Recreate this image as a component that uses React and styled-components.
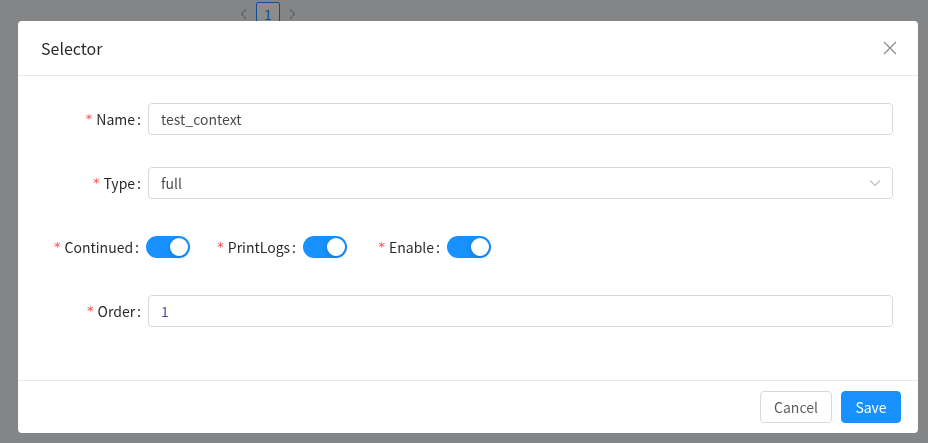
import React from "react";
import styled, { createGlobalStyle } from "styled-components";

const GlobalStyle = createGlobalStyle`
  html, body { margin: 0; padding: 0; }
  body {
    background: #f0f2f5;
    font-family: "Segoe UI", "Noto Sans CJK SC", "Open Sans", sans-serif;
    font-size: 14px;
    line-height: 1.5715;
    color: rgba(0, 0, 0, 0.85);
  }
`;

const Page = styled.div`
  min-height: 100vh;
`;

const Pagination = styled.ul`
  list-style: none;
  margin: 0;
  padding: 2px 0 0 232px;
  display: flex;
  align-items: center;
`;

const PageArrow = styled.li`
  width: 24px;
  height: 24px;
  display: flex;
  align-items: center;
  justify-content: center;
  color: rgba(0, 0, 0, 0.25);
`;

const PageItem = styled.li`
  width: 22px;
  height: 22px;
  border: 1px solid #1890ff;
  border-radius: 2px;
  display: flex;
  align-items: center;
  justify-content: center;
  color: #1890ff;
  font-size: 14px;
  background: #fff;
`;

const Overlay = styled.div`
  position: fixed;
  inset: 0;
  background: rgba(0, 0, 0, 0.45);
`;

const ModalWrap = styled.div`
  position: fixed;
  top: 21px;
  left: 18px;
  width: 900px;
`;

const Modal = styled.div`
  background: #fff;
  border-radius: 4px;
  display: flex;
  flex-direction: column;
  overflow: hidden;
`;

const Header = styled.div`
  position: relative;
  padding: 16px 24px 16px 23px;
  border-bottom: 1px solid #e8e8e8;
`;

const Title = styled.div`
  font-size: 16px;
  line-height: 22px;
  height: 22px;
  color: rgba(0, 0, 0, 0.85);
`;

const Close = styled.button`
  position: absolute;
  top: 0;
  right: 0;
  width: 56px;
  height: 54px;
  border: 0;
  background: transparent;
  padding: 0;
  display: flex;
  align-items: center;
  justify-content: center;
  color: rgba(0, 0, 0, 0.45);
`;

const Body = styled.div`
  padding: 27px 25px 53px 24px;
  display: flex;
  flex-direction: column;
  gap: 32px;
`;

const Row = styled.div`
  display: flex;
  align-items: center;
  height: 32px;
`;

const Label = styled.label`
  width: ${(p) => p.$w}px;
  flex: none;
  display: flex;
  justify-content: flex-end;
  align-items: center;
  padding-right: ${(p) => p.$pr ?? 7}px;
  box-sizing: border-box;
  white-space: nowrap;
  color: rgba(0, 0, 0, 0.85);
`;

const Req = styled.span`
  color: #ff4d4f;
  font-family: SimSun, "DejaVu Sans", sans-serif;
  font-size: 13px;
  margin-right: 4px;
`;

const Colon = styled.span`
  margin-left: 2px;
`;

const Input = styled.div`
  flex: 1;
  height: 32px;
  box-sizing: border-box;
  border: 1px solid #d9d9d9;
  border-radius: 4px;
  padding: 0 11px 0 12px;
  display: flex;
  align-items: center;
  justify-content: space-between;
  color: ${(p) => p.$color || "rgba(0, 0, 0, 0.72)"};
`;

const Arrow = styled.span`
  display: flex;
  color: #bfbfbf;
`;

const SwitchGroup = styled.div`
  display: flex;
  align-items: center;
  margin-right: ${(p) => p.$mr || 0}px;
`;

const Switch = styled.span`
  width: 44px;
  height: 22px;
  border-radius: 11px;
  background: #1890ff;
  position: relative;
  flex: none;
  &::after {
    content: "";
    position: absolute;
    top: 2px;
    right: 2px;
    width: 18px;
    height: 18px;
    border-radius: 50%;
    background: #fff;
    box-shadow: 0 2px 4px rgba(0, 35, 11, 0.2);
  }
`;

const Footer = styled.div`
  border-top: 1px solid #e8e8e8;
  padding: 10px 17px 10px 16px;
  display: flex;
  justify-content: flex-end;
  gap: 9px;
`;

const Button = styled.button`
  height: 32px;
  width: ${(p) => p.$w}px;
  box-sizing: border-box;
  border-radius: 4px;
  font-family: inherit;
  font-size: 14px;
  padding: 0;
  border: 1px solid ${(p) => (p.$primary ? "#1890ff" : "#d9d9d9")};
  background: ${(p) => (p.$primary ? "#1890ff" : "#fff")};
  color: ${(p) => (p.$primary ? "#fff" : "rgba(0, 0, 0, 0.65)")};
`;

const FieldLabel = ({ w, pr, children }) => (
  <Label $w={w} $pr={pr}>
    <Req>*</Req>
    {children}
    <Colon>:</Colon>
  </Label>
);

export default function App() {
  return (
    <Page>
      <GlobalStyle />
      <Pagination>
        <PageArrow>
          <svg width="8" height="12" viewBox="0 0 8 12" fill="none" stroke="currentColor" strokeWidth="1.2">
            <path d="M6 1 L1.5 6 L6 11" />
          </svg>
        </PageArrow>
        <PageItem>1</PageItem>
        <PageArrow>
          <svg width="8" height="12" viewBox="0 0 8 12" fill="none" stroke="currentColor" strokeWidth="1.2">
            <path d="M2 1 L6.5 6 L2 11" />
          </svg>
        </PageArrow>
      </Pagination>
      <Overlay />
      <ModalWrap>
        <Modal>
          <Header>
            <Title>Selector</Title>
            <Close aria-label="close">
              <svg width="14" height="14" viewBox="0 0 14 14" stroke="currentColor" strokeWidth="1.3" fill="none">
                <path d="M1 1 L13 13 M13 1 L1 13" />
              </svg>
            </Close>
          </Header>
          <Body>
            <Row>
              <FieldLabel w={106}>Name</FieldLabel>
              <Input>test_context</Input>
            </Row>
            <Row>
              <FieldLabel w={106}>Type</FieldLabel>
              <Input>
                full
                <Arrow>
                  <svg width="12" height="8" viewBox="0 0 12 8" fill="none" stroke="currentColor" strokeWidth="1.2">
                    <path d="M1 1.5 L6 6.5 L11 1.5" />
                  </svg>
                </Arrow>
              </Input>
            </Row>
            <Row>
              <SwitchGroup $mr={32}>
                <FieldLabel w={104}>Continued</FieldLabel>
                <Switch />
              </SwitchGroup>
              <SwitchGroup $mr={36}>
                <FieldLabel w={81}>PrintLogs</FieldLabel>
                <Switch />
              </SwitchGroup>
              <SwitchGroup>
                <FieldLabel w={64}>Enable</FieldLabel>
                <Switch />
              </SwitchGroup>
            </Row>
            <Row>
              <FieldLabel w={106}>Order</FieldLabel>
              <Input $color="#5e42a6">1</Input>
            </Row>
          </Body>
          <Footer>
            <Button $w={72}>Cancel</Button>
            <Button $w={60} $primary>Save</Button>
          </Footer>
        </Modal>
      </ModalWrap>
    </Page>
  );
}
